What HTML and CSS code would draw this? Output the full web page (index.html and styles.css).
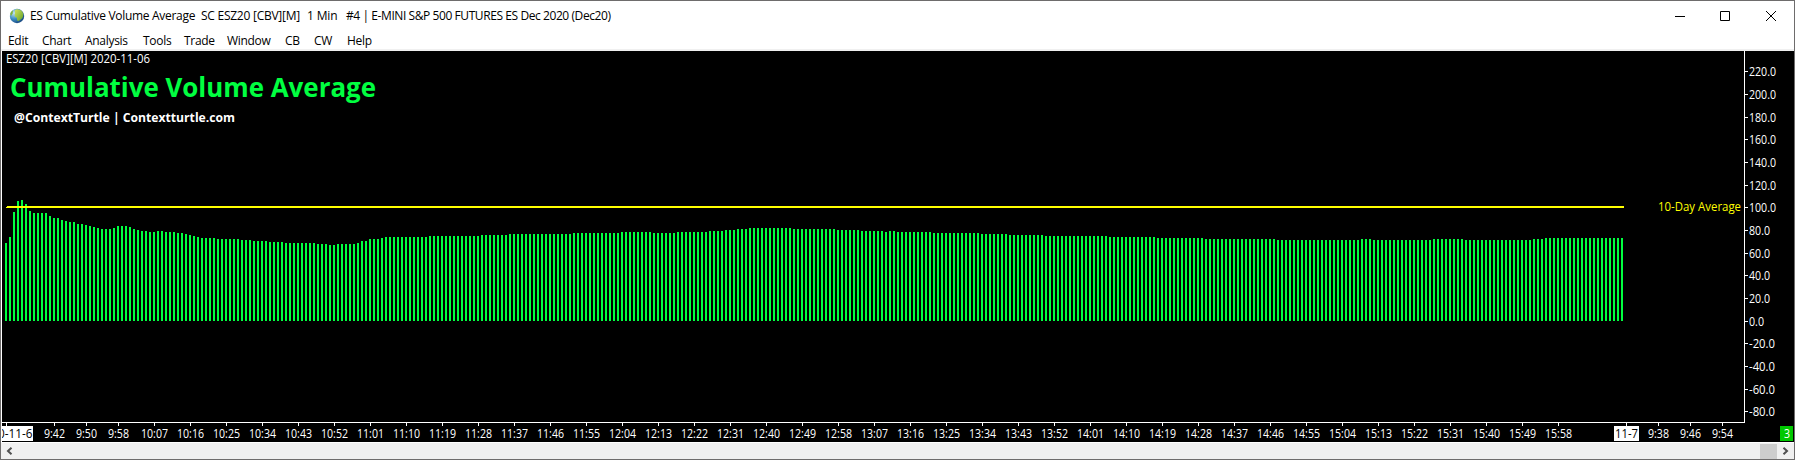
FILE: index.html
```html
<!DOCTYPE html>
<html lang="en">
<head>
<meta charset="utf-8">
<title>ES Cumulative Volume Average</title>
<link rel="stylesheet" href="styles.css">
</head>
<body>
<div class="window">
  <header class="titlebar">
    <svg class="app-icon" width="16" height="16" viewBox="0 0 16 16">
      <defs>
        <radialGradient id="globe" cx="0.3" cy="0.3" r="0.8">
          <stop offset="0" stop-color="#c4e6f2"/>
          <stop offset="0.5" stop-color="#3f8fc4"/>
          <stop offset="1" stop-color="#123f78"/>
        </radialGradient>
        <linearGradient id="land" x1="0" y1="0" x2="1" y2="1">
          <stop offset="0" stop-color="#d3e35c"/>
          <stop offset="1" stop-color="#5f9f2a"/>
        </linearGradient>
      </defs>
      <circle cx="8" cy="8" r="7.2" fill="url(#globe)"/>
      <path d="M6 2C8 .6 12 1.600 13.500 4c1.300 2.500.8 5-.6 6.500-1.500.8-2.400 2.600-4 2.500C7.500 12 8.500 10.500 7.500 9.500 6 9 5.500 8 5.700 6.500 6.500 5.500 5.500 3.500 6 2z" fill="url(#land)"/>
      <path d="M1.200 6C1.500 4.500 2.500 3 4 2.300L3.600 5.500 2 8z" fill="#7fb23c"/>
    </svg>
    <h1 class="title"><span class="t-name">ES Cumulative Volume Average</span> <span class="t-symbol">SC ESZ20 [CBV][M]</span> <span class="t-period">1 Min</span> <span class="t-desc">#4 | E-MINI S&amp;P 500 FUTURES ES Dec 2020 (Dec20)</span></h1>
    <div class="controls">
      <svg width="10" height="10"><path d="M0 5.500H10" class="glyph"/></svg>
      <svg width="10" height="10"><path d="M.5 .5H9.500V9.500H.5z" class="glyph"/></svg>
      <svg width="10" height="10"><path d="M0 0L10 10M10 0L0 10" class="glyph"/></svg>
    </div>
  </header>
  <nav class="menu">
    <span>Edit</span><span>Chart</span><span>Analysis</span><span>Tools</span><span>Trade</span><span>Window</span><span>CB</span><span>CW</span><span>Help</span>
  </nav>
  <main class="chart">
    <svg id="plot" width="1792" height="391" viewBox="2 51 1792 391"></svg>
  </main>
  <footer class="scrollbar">
    <svg width="7" height="8" class="arrow"><path d="M5.500 .8L2 4 5.500 7.200"/></svg>
    <div class="thumb"></div>
    <svg width="7" height="8" class="arrow"><path d="M1.500 .8L5 4 1.500 7.200"/></svg>
  </footer>
</div>
<script src="chart.js"></script>
</body>
</html>
```
FILE: styles.css
```css
* { box-sizing: border-box; }
body { margin: 0; font-family: "Open Sans", "Noto Sans", sans-serif; font-size: 12px; color: #000; }
.window { width: 1795px; height: 460px; border: 1px solid #6e6c6c; background: #fff; display: flex; flex-direction: column; overflow: hidden; }
.titlebar { height: 29px; display: flex; align-items: center; padding-left: 8px; flex: none; }
.app-icon { flex: none; }
.title { margin: 0 0 0 5px; font-size: 12px; font-weight: 400; line-height: 16px; white-space: nowrap; flex: 1; display: grid; grid-template-columns: 171px 106px 39px 1fr; }
.t-name { letter-spacing: -0.3px; }
.t-symbol { letter-spacing: -0.25px; }
.t-period { letter-spacing: -0.15px; }
.t-desc { letter-spacing: -0.42px; }
.controls { display: flex; gap: 36px; padding-right: 18px; }
.controls svg { display: block; width: 10px; height: 10px; }
.controls svg:first-child { margin-right: -1px; }
.glyph { stroke: #000; stroke-width: 1; fill: none; }
.menu { height: 19px; display: grid; grid-template-columns: 34px 43px 58px 41px 43px 58px 29px 33px 40px; padding: 3px 0 0 7px; line-height: 16px; letter-spacing: -0.3px; flex: none; }
.chart { height: 393px; padding-left: 1px; border-top: 2px solid #f0f0f0; flex: none; }
.chart svg { display: block; background: #000; }
.scrollbar { height: 17px; border-top: 1px solid #fff; background: #f0f0f0; display: flex; align-items: center; padding: 0 5px; flex: none; }
.thumb { width: 17px; height: 15px; background: #cdcdcd; margin: 0 5px 0 auto; }
.arrow path { fill: none; stroke: #505050; stroke-width: 2; }
.bar { fill: #00ff40; }
.average { fill: #ff0; }
.axis { fill: #fff; }
.label { fill: #fff; font-size: 12px; }
.dark { fill: #000; }
.yellow { fill: #ff0; }
.heading { fill: #00ff40; font-size: 26px; font-weight: 700; }
.credit { fill: #fff; font-size: 12px; font-weight: 700; }
.badge { fill: #00c800; }
```
FILE: chart.js
```js
const NS = 'http://www.w3.org/2000/svg';
const plot = document.getElementById('plot');

function add(tag, attrs, text) {
  const node = document.createElementNS(NS, tag);
  for (const key in attrs) node.setAttribute(key, attrs[key]);
  if (text) node.textContent = text;
  plot.appendChild(node);
  return node;
}
function rect(cls, x, y, width, height) {
  add('rect', { class: cls, x, y, width, height, 'shape-rendering': 'crispEdges' });
}
function label(cls, x, y, length, text) {
  add('text', { class: cls, x, y, textLength: length, lengthAdjust: 'spacingAndGlyphs' }, text);
}

// Bar heights as [height, number of one-minute bars]
const runs = [
  [78,1],[84,1],[109,1],[120,1],[121,1],[117,1],[110,1],[108,4],[105,1],[103,2],[101,1],[100,1],[99,2],[97,2],
  [96,1],[95,1],[94,1],[93,1],[92,3],[93,1],[95,3],[94,1],[92,1],[91,1],[90,2],[89,2],[90,2],[89,3],[88,2],
  [87,1],[86,1],[85,1],[84,1],[83,4],[82,6],[81,3],[80,4],[79,4],[78,8],[77,3],[76,2],[77,5],[78,1],[80,2],
  [82,3],[83,1],[84,11],[85,13],[86,7],[87,16],[88,12],[89,8],[88,6],[89,8],[90,4],[91,3],[92,3],[93,11],
  [92,11],[91,6],[90,6],[89,1],[90,2],[89,9],[88,12],[87,7],[86,9],[85,16],[84,12],[83,12],[82,18],[81,21],
  [82,3],[81,15],[82,8],[81,17],[82,3],[83,20]
];
let x = 5;
for (const [height, count] of runs) {
  for (let i = 0; i < count; i++, x += 4) rect('bar', x, 321 - height, 2, height);
}
rect('average', 7, 206, 1617, 2);
rect('average', 6, 207, 1, 1);

rect('axis', 1744, 51, 1, 372);
rect('axis', 2, 422, 1743, 1);

const levels = [[220,71],[200,94],[180,117],[160,139],[140,162],[120,185],[100,207],[80,230],[60,253],[40,275],
  [20,298],[0,321],[-20,343],[-40,366],[-60,389],[-80,411]];
for (const [value, y] of levels) {
  rect('axis', 1745, y, 3, 1);
  label('label', 1749, y + 5, value >= 100 ? 27 : value > 0 ? 21 : value === 0 ? 15 : 26, value.toFixed(1));
}

const times = ['9:42','9:50','9:58','10:07','10:16','10:25','10:34','10:43','10:52','11:01','11:10','11:19','11:28',
  '11:37','11:46','11:55','12:04','12:13','12:22','12:31','12:40','12:49','12:58','13:07','13:16','13:25','13:34',
  '13:43','13:52','14:01','14:10','14:19','14:28','14:37','14:46','14:55','15:04','15:13','15:22','15:31','15:40',
  '15:49','15:58'];
function timeTick(time, origin) {
  const [hour, minute] = time.split(':').map(Number);
  const tx = origin + 4 * (hour * 60 + minute - 570);
  const length = hour < 10 ? 21 : 27;
  rect('axis', tx, 423, 1, 3);
  label('label', tx - (length - 1) / 2, 438, length, time);
}
times.forEach(time => timeTick(time, 6));
['9:38', '9:46', '9:54'].forEach(time => timeTick(time, 1626));

rect('axis', 6, 423, 1, 3);
rect('axis', 1626, 423, 1, 3);
rect('axis', 2, 426, 31, 15);
rect('axis', 1614, 426, 25, 15);
label('label dark', -2, 438, 34.5, '0-11-6');
label('label dark', 1615, 438, 23, '11-7');

label('label', 6, 63, 144, 'ESZ20 [CBV][M] 2020-11-06');
label('heading', 10, 97, 366, 'Cumulative Volume Average');
label('credit', 14, 122, 221, '@ContextTurtle | Contextturtle.com');
label('label yellow', 1658, 211, 83, '10-Day Average');
rect('badge', 1780, 426, 13, 15);
label('label', 1784, 438, 6, '3');
```
